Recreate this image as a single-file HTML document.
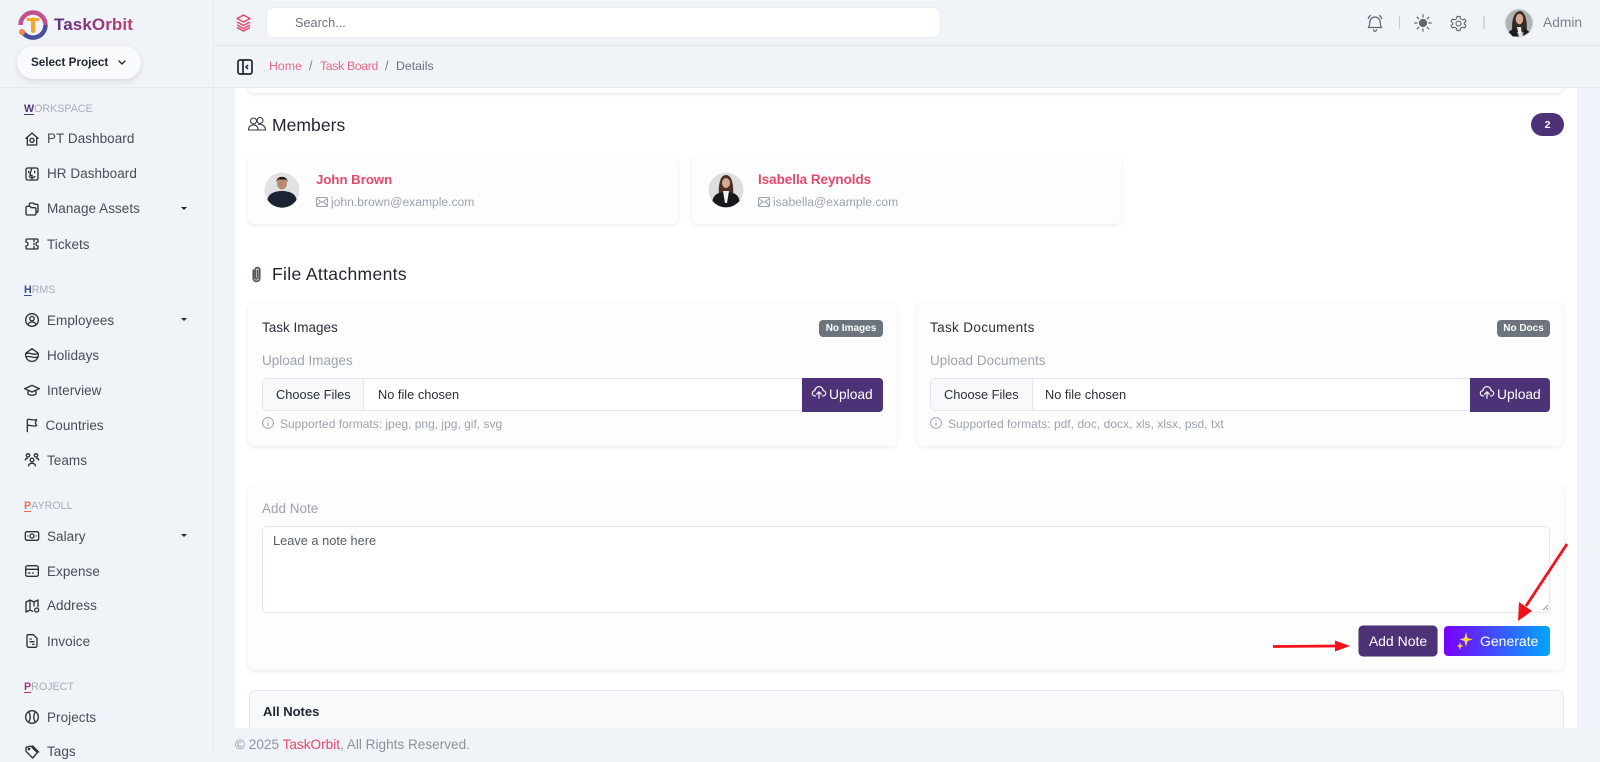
<!DOCTYPE html>
<html><head><meta charset="utf-8"><style>
*{box-sizing:border-box}
html,body{margin:0;padding:0;width:1600px;height:755px;overflow:hidden;background:#f0f4f8;font-family:"Liberation Sans",sans-serif;color:#333}
.a{position:absolute}
.t{position:absolute;white-space:nowrap;line-height:20px;height:20px}
.nav{font-size:13.5px;color:#454d59;letter-spacing:.05px;margin-top:1px}
.sec{font-size:10.7px;color:#a7adb6}
.sec b{font-weight:700;text-decoration:underline;text-underline-offset:2px}
svg{position:absolute;overflow:visible}
.i{fill:none;stroke:#2b2f36;stroke-width:2;stroke-linecap:round;stroke-linejoin:round}
.g{fill:none;stroke:#5f6670;stroke-width:1.6;stroke-linecap:round;stroke-linejoin:round}
.card{position:absolute;background:#fdfdfe;border-radius:6px;box-shadow:0 1px 4px rgba(30,40,60,.1)}
.gray{color:#9ca3af}
.btn{position:absolute;border-radius:4px;color:#fff;font-size:14px;text-align:center}
.field{position:absolute;background:#fff;border:1px solid #e3e8ee;border-radius:5px}
</style></head><body>

<!-- main white area -->
<div class="a" style="left:235px;top:87px;width:1342px;height:641px;background:#fff"></div>
<div class="a" style="left:213px;top:0;width:1px;height:755px;background:#e8ecf1"></div>
<div class="a" style="left:214px;top:45px;width:1386px;height:1px;background:#e3e7ec"></div>
<!-- top card remnant -->
<div class="a" style="left:248px;top:80px;width:1315px;height:13px;background:#fdfdfe;border-radius:0 0 6px 6px;box-shadow:0 1px 4px rgba(30,40,60,.12)"></div>
<div class="a" style="left:214px;top:46px;width:1386px;height:41px;background:#f0f4f8"></div>
<div class="a" style="left:0;top:87px;width:1600px;height:1px;background:#e5e9ee"></div>

<!-- SIDEBAR -->
<svg style="left:17px;top:9px" width="32" height="32" viewBox="0 0 32 32">
<path d="M3.5 16A12.5 12.5 0 0 1 28.5 16" fill="none" stroke="#c2508f" stroke-width="4.5"/>
<path d="M28.5 16A12.5 12.5 0 0 1 5 22" fill="none" stroke="#4a4f9e" stroke-width="4.5"/>
<path d="M11 10.500H21" stroke="#f5a52a" stroke-width="3" stroke-linecap="round"/>
<path d="M16 10.500V22" stroke="#f5a52a" stroke-width="4" stroke-linecap="round"/>
<circle cx="5" cy="23" r="3" fill="#f0864a"/>
</svg>
<div class="t" style="left:54px;top:15px;font-size:17px;font-weight:700;background:linear-gradient(90deg,#5a2f80,#c23f72);-webkit-background-clip:text;background-clip:text;color:transparent;letter-spacing:.1px">TaskOrbit</div>
<div class="a" style="left:17px;top:46px;width:124px;height:33px;border-radius:17px;background:#f8fafc;box-shadow:0 2px 6px rgba(30,40,60,.13)"></div>
<div class="t" style="left:31px;top:53px;font-size:11.7px;font-weight:700;color:#1f2530">Select Project</div>
<svg style="left:117px;top:59px" width="10" height="8" viewBox="0 0 10 8"><path d="M2 2L5 5L8 2" fill="none" stroke="#222" stroke-width="1.300" stroke-linecap="round"/></svg>

<div class="t sec" style="left:24px;top:99px"><b style="color:#4d3277">W</b>ORKSPACE</div>
<div class="t nav" style="left:47px;top:128px">PT Dashboard</div>
<div class="t nav" style="left:47px;top:163px">HR Dashboard</div>
<div class="t nav" style="left:47px;top:198px">Manage Assets</div>
<div class="t nav" style="left:47px;top:234px">Tickets</div>
<div class="t sec" style="left:24px;top:280px"><b style="color:#3f4a96">H</b>RMS</div>
<div class="t nav" style="left:47px;top:310px">Employees</div>
<div class="t nav" style="left:47px;top:345px">Holidays</div>
<div class="t nav" style="left:47px;top:380px">Interview</div>
<div class="t nav" style="left:45.500px;top:415px">Countries</div>
<div class="t nav" style="left:47px;top:450px">Teams</div>
<div class="t sec" style="left:24px;top:496px"><b style="color:#ef6c4d">P</b>AYROLL</div>
<div class="t nav" style="left:47px;top:526px">Salary</div>
<div class="t nav" style="left:47px;top:561px">Expense</div>
<div class="t nav" style="left:47px;top:595px">Address</div>
<div class="t nav" style="left:47px;top:631px">Invoice</div>
<div class="t sec" style="left:24px;top:677px"><b style="color:#a8367f">P</b>ROJECT</div>
<div class="t nav" style="left:47px;top:707px">Projects</div>
<div class="t nav" style="left:47px;top:741px">Tags</div>

<!-- carets -->
<svg style="left:180px;top:206px" width="8" height="5"><path d="M1 1H7L4 4Z" fill="#222"/></svg>
<svg style="left:180px;top:317px" width="8" height="5"><path d="M1 1H7L4 4Z" fill="#222"/></svg>
<svg style="left:180px;top:533px" width="8" height="5"><path d="M1 1H7L4 4Z" fill="#222"/></svg>

<!-- nav icons -->
<svg style="left:24px;top:131px" width="16" height="16" viewBox="0 0 24 24"><path class="i" d="M3 11L12 3L21 11M5 9V21H19V9"/><circle class="i" cx="12" cy="14" r="3"/></svg>
<svg style="left:24px;top:166px" width="16" height="16" viewBox="0 0 24 24"><rect class="i" x="3" y="3" width="18" height="18" rx="2.500"/><path class="i" d="M12 3C10 8 9 11 9 14H12V21M7 8V10M16 8V10M8 16C10 18 14 18 16.500 16"/></svg>
<svg style="left:24px;top:201px" width="16" height="16" viewBox="0 0 24 24"><path class="i" d="M8 6V5A2 2 0 0 1 10 3H14L16 5H19A2 2 0 0 1 21 7V15A2 2 0 0 1 19 17H18"/><path class="i" d="M3 10A2 2 0 0 1 5 8H9L11 10H16A2 2 0 0 1 18 12V19A2 2 0 0 1 16 21H5A2 2 0 0 1 3 19Z"/></svg>
<svg style="left:24px;top:236px" width="16" height="16" viewBox="0 0 24 24"><path class="i" d="M3 6A1.500 1.500 0 0 1 4.500 4.500H19.500A1.500 1.500 0 0 1 21 6V9A3 3 0 0 0 21 15V18A1.500 1.500 0 0 1 19.500 19.500H4.500A1.500 1.500 0 0 1 3 18V15A3 3 0 0 0 3 9ZM15 5V8M15 11V13M15 16V19"/></svg>
<svg style="left:24px;top:312px" width="16" height="16" viewBox="0 0 24 24"><circle class="i" cx="12" cy="12" r="9.500"/><circle class="i" cx="12" cy="10" r="3.300"/><path class="i" d="M6 19C7 16 9 15 12 15S17 16 18 19"/></svg>
<svg style="left:24px;top:347px" width="16" height="16" viewBox="0 0 24 24"><path class="i" d="M12 2.500L21 9A9.500 9.500 0 1 1 3 9ZM3.500 10C8 7 13 13 20.500 10M3 15C9 12 14 18 20 15"/></svg>
<svg style="left:24px;top:382px" width="16" height="16" viewBox="0 0 24 24"><path class="i" d="M12 5L23 10L12 15L1 10ZM6 12.500V18C9 20.500 15 20.500 18 18V12.500"/></svg>
<svg style="left:24px;top:417px" width="16" height="16" viewBox="0 0 24 24"><path class="i" d="M5 22V4C9 2 12 6 19 4L17 9L19 13C12 15 9 11 5 13"/></svg>
<svg style="left:24px;top:452px" width="16" height="16" viewBox="0 0 24 24"><circle class="i" cx="6" cy="5" r="2.500"/><circle class="i" cx="18" cy="5" r="2.500"/><circle class="i" cx="12" cy="12" r="2.800"/><path class="i" d="M2 12C2 10 3 9.500 5 9.500M22 12C22 10 21 9.500 19 9.500M7 21C7 18 9 17 12 17S17 18 17 21"/></svg>
<svg style="left:24px;top:528px" width="16" height="16" viewBox="0 0 24 24"><rect class="i" x="2" y="5.500" width="20" height="13" rx="2.500"/><circle class="i" cx="12" cy="12" r="3"/><path class="i" d="M6 12H6.100M18 12H18.100"/></svg>
<svg style="left:24px;top:563px" width="16" height="16" viewBox="0 0 24 24"><rect class="i" x="2.500" y="4" width="19" height="16" rx="3"/><path class="i" d="M2.500 9.500H21.500M6.500 15H9M13 15H14"/></svg>
<svg style="left:24px;top:598px" width="16" height="16" viewBox="0 0 24 24"><path class="i" d="M3 6L9 3L15 6L21 3V13M3 6V21L9 18L13 20M9 3V18M15 6V12"/><circle class="i" cx="19" cy="18" r="3"/></svg>
<svg style="left:24px;top:633px" width="16" height="16" viewBox="0 0 24 24"><path class="i" d="M6 2.500H14L19.500 8V19A2.500 2.500 0 0 1 17 21.500H7A2.500 2.500 0 0 1 4.500 19V4A1.500 1.500 0 0 1 6 2.500ZM9 9H11M9 13H15M13 17H15"/></svg>
<svg style="left:24px;top:709px" width="16" height="16" viewBox="0 0 24 24"><circle class="i" cx="12" cy="12" r="9.500"/><path class="i" d="M7 4C10 9 10 15 7 20M17 4C14 9 14 15 17 20"/></svg>
<svg style="left:24px;top:744px" width="16" height="16" viewBox="0 0 24 24"><path class="i" d="M3 5L10 3L20 13L13 21L3 11ZM13 3L22 12"/><circle class="i" cx="7.500" cy="7.500" r="1"/></svg>

<!-- TOP BAR -->
<svg style="left:236px;top:14px" width="15" height="18" viewBox="0 0 15 18"><g fill="none" stroke="#e8476a" stroke-width="1.500" stroke-linejoin="round"><path d="M7.500 1L14 4.500L7.500 8L1 4.500Z"/><path d="M1 8L7.500 11.500L14 8"/><path d="M1 11L7.500 14.500L14 11"/><path d="M1 13.500L7.500 17L14 13.500"/></g></svg>
<div class="a" style="left:267px;top:8px;width:673px;height:29px;background:#fff;border-radius:6px;box-shadow:0 0 1px rgba(30,40,60,.25)"></div>
<div class="t" style="left:295px;top:12.500px;font-size:12.7px;color:#6b7280">Search...</div>

<svg style="left:1366px;top:14px" width="18" height="18" viewBox="0 0 24 24"><path class="g" d="M12 4A7 7 0 0 0 5 11C5 15 4 17 3 18H21C20 17 19 15 19 11A7 7 0 0 0 12 4ZM10 21A2 2 0 0 0 14 21M3 6C3.500 4.500 4.500 3 6 2M21 6C20.500 4.500 19.500 3 18 2"/></svg>
<div class="a" style="left:1399px;top:16px;width:1px;height:13px;background:#c9ced5"></div>
<svg style="left:1414px;top:14px" width="18" height="18" viewBox="0 0 24 24"><circle cx="12" cy="12" r="5.500" fill="#5f6670"/><path class="g" d="M12 1V4M12 20V23M1 12H4M20 12H23M4.200 4.200L6.300 6.300M17.700 17.700L19.800 19.800M4.200 19.800L6.300 17.700M17.700 6.300L19.800 4.200"/></svg>
<svg style="left:1450px;top:15px" width="17" height="17" viewBox="0 0 24 24"><path class="g" d="M10 2H14L14.700 5.200L17.500 6.800L20.700 5.800L22.500 9L20.200 11V13L22.500 15L20.700 18.200L17.500 17.200L14.700 18.800L14 22H10L9.300 18.800L6.500 17.200L3.300 18.200L1.500 15L3.800 13V11L1.500 9L3.300 5.800L6.500 6.800L9.300 5.200Z"/><circle class="g" cx="12" cy="12" r="3.500"/></svg>
<div class="a" style="left:1483px;top:16px;width:2px;height:13px;background:#d4d8de"></div>
<svg style="left:1504px;top:8px" width="30" height="30" viewBox="0 0 30 30">
<circle cx="15" cy="15" r="15" fill="#e6e9ed"/><circle cx="15" cy="15" r="13.500" fill="#aeb3b2"/>
<path d="M8.500 24C7 15 9 4 16 3C22 4 23.500 15 22.500 24Z" fill="#352a27"/>
<ellipse cx="15.500" cy="11" rx="3.800" ry="5.200" fill="#d9a88f"/>
<path d="M4.500 24L11 19.500L15 28.500H9ZM25.500 24L20 19.500L19 28Z" fill="#1b1b20"/><path d="M13 19L17 19L18 28H15Z" fill="#e8e8ea"/></svg>
<div class="t" style="left:1543px;top:13px;font-size:13.8px;color:#7b828c">Admin</div>

<!-- BREADCRUMB -->
<svg style="left:237px;top:59px" width="16" height="16" viewBox="0 0 16 16"><rect x="1" y="1" width="14" height="14" rx="2" fill="none" stroke="#1f2530" stroke-width="1.700"/><path d="M6 1V15" stroke="#1f2530" stroke-width="1.700"/><path d="M11 6L9 8L11 10" fill="none" stroke="#1f2530" stroke-width="1.500"/></svg>
<div class="t" style="left:269px;top:56px;font-size:12.300px;color:#e96a86">Home</div>
<div class="t" style="left:309px;top:56px;font-size:12.500px;color:#7b828c">/</div>
<div class="t" style="left:320px;top:56px;font-size:12.300px;letter-spacing:-.35px;color:#e96a86">Task Board</div>
<div class="t" style="left:385px;top:56px;font-size:12.500px;color:#7b828c">/</div>
<div class="t" style="left:396px;top:56px;font-size:12.300px;color:#6b7280">Details</div>

<!-- MEMBERS -->
<svg style="left:248px;top:117px" width="18" height="15" viewBox="0 0 18 15"><g fill="none" stroke="#333a45" stroke-width="1.100"><circle cx="5.500" cy="4" r="3"/><circle cx="12" cy="3.500" r="3"/><path d="M.5 13C.5 9.500 2.500 8 5.500 8S10 9.500 10 13ZM10 7.500C13.500 6.500 17.500 9 17.500 13H10"/></g></svg>
<div class="t" style="left:272px;top:115px;font-size:17.500px;letter-spacing:.05px;color:#1f2530">Members</div>
<div class="a" style="left:1531px;top:113px;width:33px;height:23px;background:#4d3277;border-radius:12px;color:#fff;font-size:10.500px;font-weight:700;text-align:center;line-height:24px">2</div>

<div class="card" style="left:248px;top:156px;width:430px;height:68px"></div>
<svg style="left:263px;top:171px" width="38" height="38" viewBox="0 0 38 38">
<circle cx="19" cy="19" r="19" fill="#fff"/><circle cx="19" cy="19" r="17.500" fill="#e2e2e2"/>
<ellipse cx="19" cy="12.500" rx="5" ry="6" fill="#b98a70"/><path d="M13.500 11C13 4 25 4 24.500 11L23 8.500H15Z" fill="#1f1a18"/>
<path d="M4.500 29C5 23 11 20 19 20S33 23 33.500 29A17.500 17.500 0 0 1 4.500 29Z" fill="#1c2333"/></svg>
<div class="t" style="left:316px;top:170px;font-size:13.200px;font-weight:700;color:#e8476a">John Brown</div>
<svg style="left:316px;top:197px" width="12" height="10" viewBox="0 0 12 10"><rect x=".5" y=".5" width="11" height="9" rx="1" fill="none" stroke="#9ca3af"/><path d="M.5 1.500L6 5.500L11.500 1.500M.5 9L4.500 4.500M11.500 9L7.500 4.500" fill="none" stroke="#9ca3af"/></svg>
<div class="t gray" style="left:331px;top:192px;font-size:12.100px">john.brown@example.com</div>

<div class="card" style="left:692px;top:156px;width:429px;height:68px"></div>
<svg style="left:707px;top:171px" width="38" height="38" viewBox="0 0 38 38">
<circle cx="19" cy="19" r="19" fill="#fff"/><circle cx="19" cy="19" r="17.500" fill="#dedede"/>
<path d="M12 26C11 14 13 4 19 4S27 14 26 26Z" fill="#4a3026"/><ellipse cx="19" cy="12" rx="4" ry="5" fill="#d7ab96"/>
<path d="M5.500 30C6 24 11 21 19 21S32 24 32.500 30A17.500 17.500 0 0 1 5.500 30Z" fill="#18181c"/><path d="M16 20H22L20 32H18Z" fill="#f0f0f0"/></svg>
<div class="t" style="left:758px;top:170px;font-size:13.400px;font-weight:700;color:#e8476a">Isabella Reynolds</div>
<svg style="left:758px;top:197px" width="12" height="10" viewBox="0 0 12 10"><rect x=".5" y=".5" width="11" height="9" rx="1" fill="none" stroke="#9ca3af"/><path d="M.5 1.500L6 5.500L11.500 1.500M.5 9L4.500 4.500M11.500 9L7.500 4.500" fill="none" stroke="#9ca3af"/></svg>
<div class="t gray" style="left:773px;top:192px;font-size:12.100px">isabella@example.com</div>

<!-- FILE ATTACHMENTS -->
<svg style="left:251px;top:265px" width="11" height="18" viewBox="0 0 10 17"><path d="M2 5V12.500A3 3 0 0 0 8 12.500V4A2.200 2.200 0 0 0 3.800 4V12A1 1 0 0 0 6 12V5" fill="none" stroke="#55595f" stroke-width="1.700" stroke-linecap="round"/></svg>
<div class="t" style="left:272px;top:264px;font-size:17.500px;letter-spacing:.35px;color:#1f2530">File Attachments</div>

<div class="card" style="left:248px;top:303px;width:649px;height:143px"></div>
<div class="t" style="left:262px;top:318px;font-size:13.500px;color:#2a303a">Task Images</div>
<div class="a" style="left:819px;top:320px;width:64px;height:17px;background:#6c757d;border-radius:4px;color:#fff;font-size:10px;font-weight:700;text-align:center;line-height:17px">No Images</div>
<div class="t gray" style="left:262px;top:351px;font-size:13.500px">Upload Images</div>
<div class="field" style="left:262px;top:378px;width:545px;height:33px"></div>
<div class="a" style="left:263px;top:379px;width:101px;height:31px;background:#f7f9fb;border-right:1px solid #e3e8ee;border-radius:5px 0 0 5px"></div>
<div class="t" style="left:276px;top:385px;font-size:12.800px;color:#2a303a">Choose Files</div>
<div class="t" style="left:378px;top:385px;font-size:12.800px;color:#2a303a">No file chosen</div>
<div class="btn" style="left:802px;top:378px;width:81px;height:33.500px;background:#4d3277;border-radius:0 4px 4px 0"></div>
<svg style="left:812px;top:386px" width="14" height="14" viewBox="0 0 24 24"><path d="M6 17H5A4.500 4.500 0 0 1 5 8A7 7 0 0 1 19 8A4.500 4.500 0 0 1 19 17H18M12 21V10M8 14L12 10L16 14" fill="none" stroke="#fff" stroke-width="2" stroke-linecap="round" stroke-linejoin="round"/></svg>
<div class="t" style="left:829px;top:385px;font-size:13.800px;color:#fff">Upload</div>
<svg style="left:262px;top:417px" width="12" height="12" viewBox="0 0 12 12"><circle cx="6" cy="6" r="5.400" fill="none" stroke="#9ca3af"/><path d="M6 5.500V9M6 3V3.800" stroke="#9ca3af" stroke-width="1.100"/></svg>
<div class="t gray" style="left:280px;top:414px;font-size:12px">Supported formats: jpeg, png, jpg, gif, svg</div>

<div class="card" style="left:917px;top:303px;width:646px;height:143px"></div>
<div class="t" style="left:930px;top:318px;font-size:13.500px;letter-spacing:.35px;color:#2a303a">Task Documents</div>
<div class="a" style="left:1497px;top:320px;width:53px;height:17px;background:#6c757d;border-radius:4px;color:#fff;font-size:10px;font-weight:700;text-align:center;line-height:17px">No Docs</div>
<div class="t gray" style="left:930px;top:351px;font-size:13.500px;letter-spacing:.05px">Upload Documents</div>
<div class="field" style="left:930px;top:378px;width:545px;height:33px"></div>
<div class="a" style="left:931px;top:379px;width:102px;height:31px;background:#f7f9fb;border-right:1px solid #e3e8ee;border-radius:5px 0 0 5px"></div>
<div class="t" style="left:944px;top:385px;font-size:12.800px;color:#2a303a">Choose Files</div>
<div class="t" style="left:1045px;top:385px;font-size:12.800px;color:#2a303a">No file chosen</div>
<div class="btn" style="left:1470px;top:378px;width:80px;height:33.500px;background:#4d3277;border-radius:0 4px 4px 0"></div>
<svg style="left:1480px;top:386px" width="14" height="14" viewBox="0 0 24 24"><path d="M6 17H5A4.500 4.500 0 0 1 5 8A7 7 0 0 1 19 8A4.500 4.500 0 0 1 19 17H18M12 21V10M8 14L12 10L16 14" fill="none" stroke="#fff" stroke-width="2" stroke-linecap="round" stroke-linejoin="round"/></svg>
<div class="t" style="left:1497px;top:385px;font-size:13.800px;color:#fff">Upload</div>
<svg style="left:930px;top:417px" width="12" height="12" viewBox="0 0 12 12"><circle cx="6" cy="6" r="5.400" fill="none" stroke="#9ca3af"/><path d="M6 5.500V9M6 3V3.800" stroke="#9ca3af" stroke-width="1.100"/></svg>
<div class="t gray" style="left:948px;top:414px;font-size:12px;letter-spacing:.03px">Supported formats: pdf, doc, docx, xls, xlsx, psd, txt</div>

<!-- NOTE -->
<div class="card" style="left:248px;top:486px;width:1316px;height:184px"></div>
<div class="t gray" style="left:262px;top:499px;font-size:13.500px">Add Note</div>
<div class="field" style="left:262px;top:526px;width:1288px;height:87px"></div>
<div class="t" style="left:273px;top:531px;font-size:12.800px;color:#555c67">Leave a note here</div>
<svg style="left:1542px;top:604px" width="7" height="7"><path d="M1 6L6 1M4 6L6 4" stroke="#777" stroke-width=".8"/></svg>
<div class="btn" style="left:1359px;top:626px;width:78px;height:30px;background:#4d3277;line-height:30px;font-size:14px;box-shadow:0 0 0 .5px #3d2762">Add Note</div>
<div class="btn" style="left:1444px;top:626px;width:106px;height:30px;background:linear-gradient(90deg,#7a00ff,#00a6ff)"></div>
<svg style="left:1457px;top:632px" width="16" height="18" viewBox="0 0 16 18"><path d="M9 0L10.500 6L16 7.500L10.500 9L9 15L7.500 9L2.500 7.500L7.500 6Z" fill="#ffd84d"/><path d="M3 10L4 13L6.500 14L4 15L3 18L2 15L0 14L2 13Z" fill="#ffc83d"/></svg>
<div class="t" style="left:1480px;top:631px;font-size:14px;color:#fff">Generate</div>

<!-- ARROWS -->
<svg style="left:0;top:0" width="1600" height="755"><path d="M1273 646.500L1338 646" stroke="#f5101a" stroke-width="2.800"/><path d="M1335 640.500L1350 646L1335 651.500Z" fill="#f5101a"/><path d="M1567 544L1526 606" stroke="#f5101a" stroke-width="2.800"/><path d="M1519 602L1532 611L1518 621Z" fill="#f5101a"/></svg>

<!-- ALL NOTES -->
<div class="a" style="left:249px;top:690px;width:1315px;height:50px;background:#f7f9fb;border:1px solid #e5e9ef;border-radius:6px"></div>
<div class="t" style="left:263px;top:702px;font-size:13px;font-weight:700;color:#1f2530">All Notes</div>

<!-- FOOTER -->
<div class="a" style="left:214px;top:728px;width:1386px;height:27px;background:#f0f4f8"></div>
<div class="t" style="left:235px;top:735px;font-size:13.600px;color:#8b929c">© 2025 <span style="color:#e8476a">TaskOrbit</span>, All Rights Reserved.</div>
</body></html>
